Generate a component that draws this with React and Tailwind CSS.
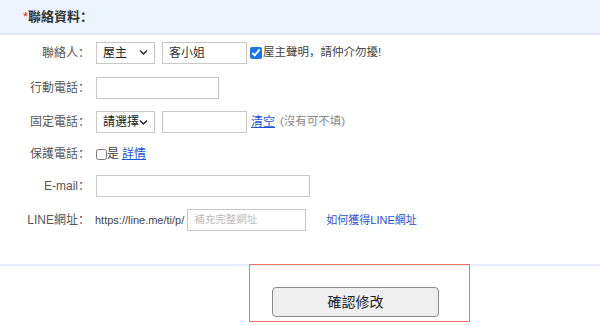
import React from "react";
import { FaChevronDown } from "react-icons/fa";

const font = {
  fontFamily: '"Liberation Sans", "Noto Sans CJK SC", sans-serif',
};

const Row = ({ label, h, children }) => (
  <div className={`flex items-center ${h}`}>
    <div className="w-[90px] shrink-0 text-right text-[12px] text-[#555]">
      {label}
    </div>
    <div className="ml-[6px] flex items-center">{children}</div>
  </div>
);

const Select = ({ value, w }) => (
  <div
    className={`flex h-[22px] ${w} items-center justify-between border border-[#c8c8c8] bg-white pl-[6px] pr-[6px] text-[12px] text-[#222]`}
  >
    <span>{value}</span>
    <FaChevronDown className="text-[9px] text-[#222]" />
  </div>
);

const Field = ({ w, value, placeholder }) => (
  <div
    className={`flex h-[22px] ${w} items-center border border-[#c8c8c8] bg-white px-[6px] text-[12px] text-[#333]`}
  >
    {value ? (
      <span>{value}</span>
    ) : (
      <span className="text-[10.5px] text-[#bbb]">{placeholder}</span>
    )}
  </div>
);

export default function App() {
  return (
    <div className="w-[600px] h-[325px] overflow-hidden bg-white" style={font}>
      <div className="flex h-[35px] items-center border-b-2 border-[#dbe7fa] bg-[#eef4fd] pl-[23px] text-[13px] font-bold text-[#333]">
        <span className="text-[#e02020] font-normal">*</span>
        <span>聯絡資料：</span>
      </div>

      <div className="border-b-2 border-[#e4edfa] pb-[26px]">
        <Row label="聯絡人：" h="h-[35px]">
          <Select value="屋主" w="w-[59px]" />
          <div className="ml-[7px]">
            <Field w="w-[85px]" value="客小姐" />
          </div>
          <label className="ml-[3px] flex items-center text-[11.5px] text-[#444]">
            <input
              type="checkbox"
              checked
              readOnly
              className="m-0 h-[12px] w-[12px] accent-[#1a73e8]"
            />
            <span className="ml-[1px]">屋主聲明，請仲介勿擾!</span>
          </label>
        </Row>

        <Row label="行動電話：" h="h-[35px]">
          <Field w="w-[123px]" />
        </Row>

        <Row label="固定電話：" h="h-[34px]">
          <Select value="請選擇" w="w-[59px]" />
          <div className="ml-[7px]">
            <Field w="w-[85px]" />
          </div>
          <a className="ml-[4px] text-[12px] text-[#1a56d6] underline">清空</a>
          <span className="ml-[5px] text-[11.5px] text-[#888]">(沒有可不填)</span>
        </Row>

        <Row label="保護電話：" h="h-[30px]">
          <label className="flex items-center text-[12px] text-[#444]">
            <input
              type="checkbox"
              readOnly
              className="m-0 h-[11px] w-[11px]"
            />
            <span className="ml-[0px]">是</span>
          </label>
          <a className="ml-[3px] text-[12px] text-[#1a56d6] underline">詳情</a>
        </Row>

        <Row label="E-mail：" h="h-[33px]">
          <Field w="w-[214px]" />
        </Row>

        <Row label="LINE網址：" h="h-[36px]">
          <span className="-ml-[1px] text-[11px] text-[#444]">https://line.me/ti/p/</span>
          <div className="ml-[3px]">
            <Field w="w-[119px]" placeholder="補充完整網址" />
          </div>
          <a className="ml-[20px] text-[11px] text-[#2a55d4]">如何獲得LINE網址</a>
        </Row>
      </div>

      <div className="ml-[249px] -mt-[2px] h-[58px] w-[221px] border border-[#f07070] pl-[22px] pt-[22px]">
        <button className="h-[30px] w-[167px] rounded-[4px] border border-[#8a8a8a] bg-[#efefef] text-[14px] text-[#222]">
          確認修改
        </button>
      </div>
    </div>
  );
}
